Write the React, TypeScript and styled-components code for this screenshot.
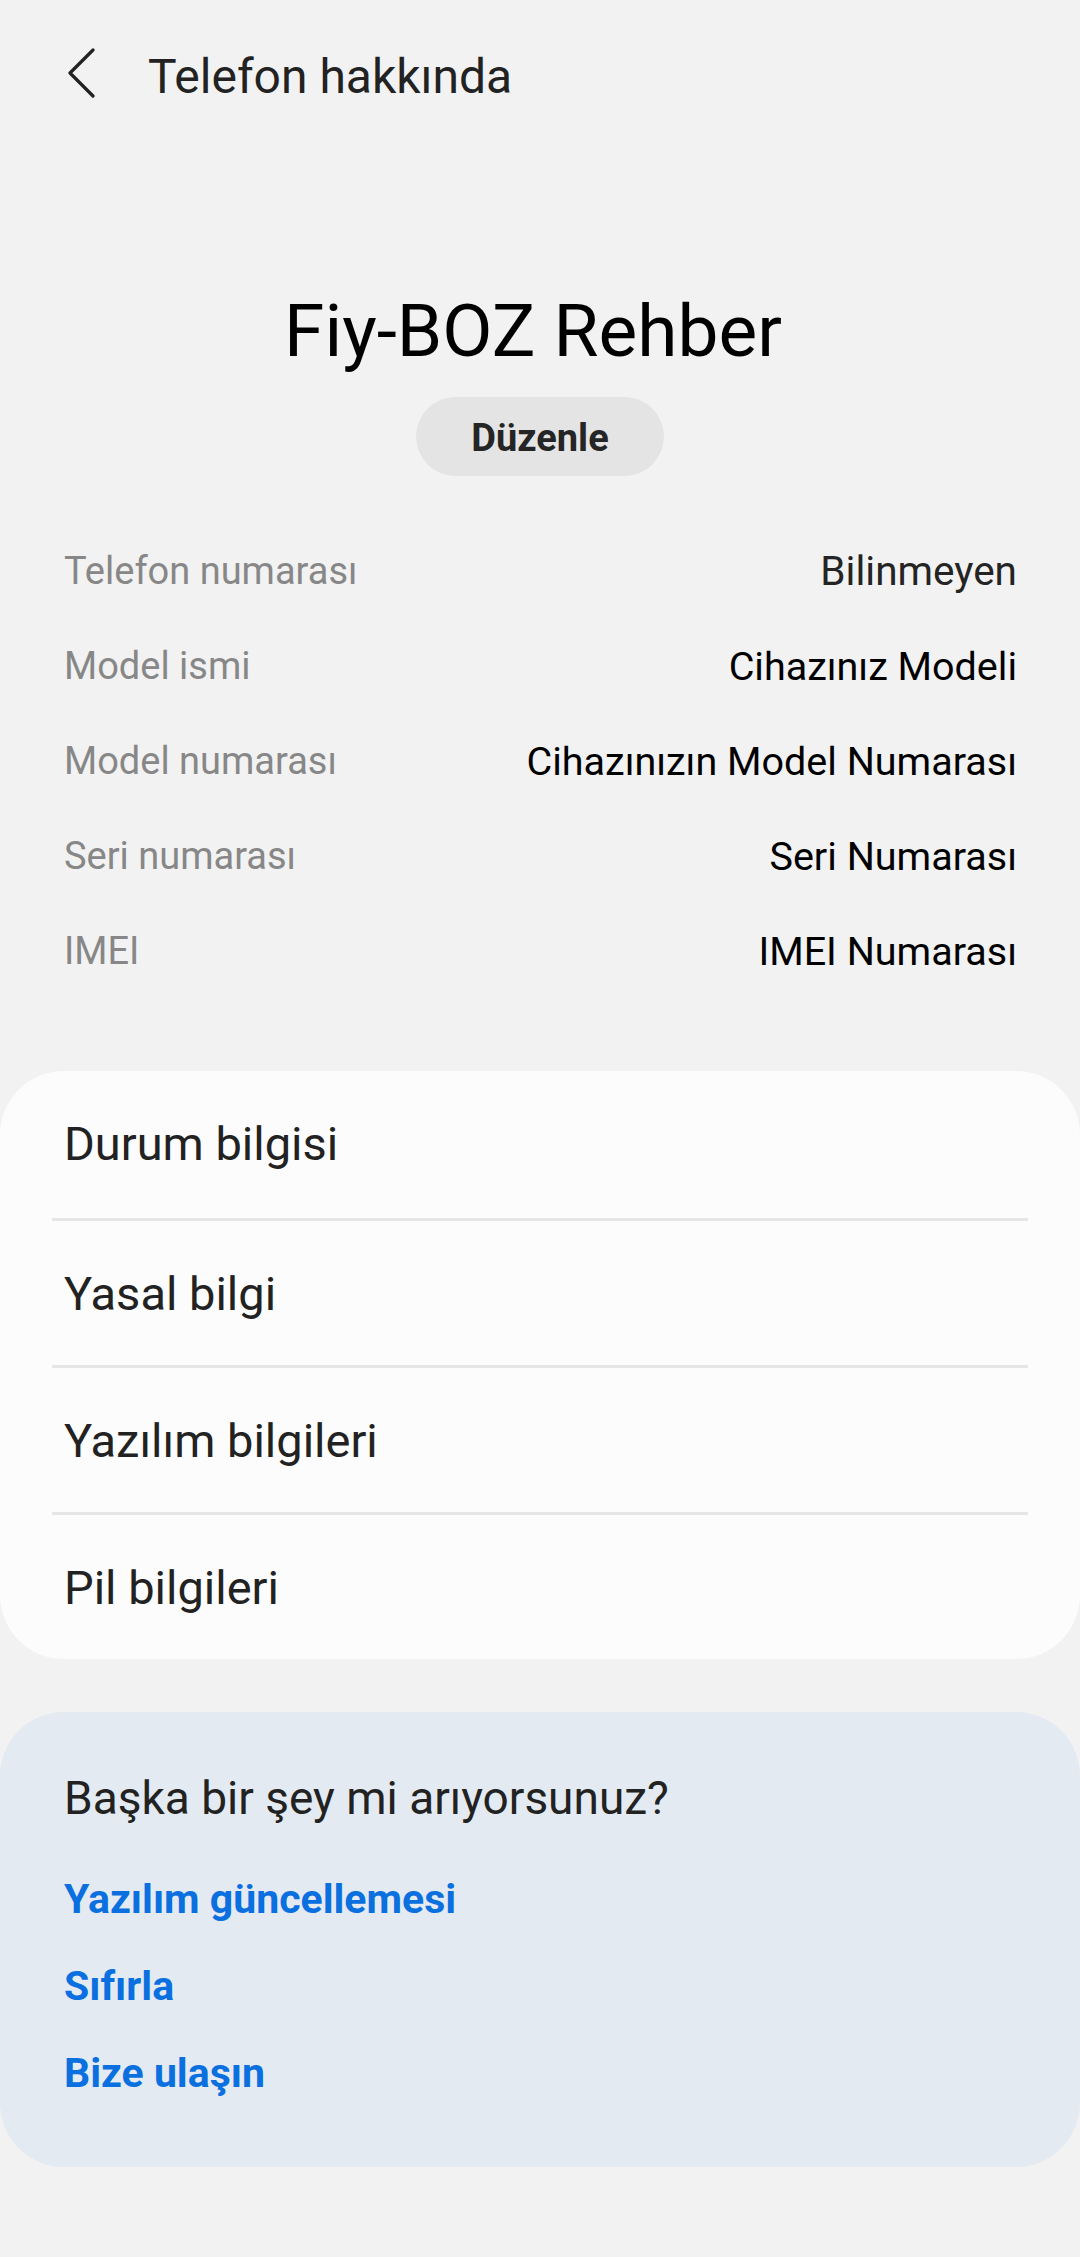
import React from "react";
import styled, { createGlobalStyle } from "styled-components";

const GlobalStyle = createGlobalStyle`
  html, body {
    margin: 0;
    padding: 0;
    background: #f2f2f2;
  }
  body {
    font-family: Roboto, "Noto Sans", sans-serif;
    color: #222;
    -webkit-font-smoothing: antialiased;
  }
  * { box-sizing: border-box; }
`;

const Page = styled.div`
  width: 1080px;
  min-height: 2257px;
  background: #f2f2f2;
  display: flex;
  flex-direction: column;
`;

const Header = styled.header`
  display: flex;
  align-items: flex-start;
  padding: 48px 0 0 66px;
  height: 160px;
`;

const BackButton = styled.button`
  width: 32px;
  height: 50px;
  padding: 0;
  border: none;
  background: transparent;
  display: flex;
  align-items: center;
  justify-content: center;
  cursor: pointer;
`;

const HeaderTitle = styled.h1`
  margin: 5px 0 0 50px;
  font-size: 48px;
  line-height: 48px;
  font-weight: 400;
  color: #222;
`;

const Profile = styled.section`
  display: flex;
  flex-direction: column;
  align-items: center;
  padding-top: 135px;
`;

const DeviceName = styled.h2`
  margin: 0 14px 0 0;
  font-size: 73px;
  line-height: 72px;
  font-weight: 400;
  color: #000;
`;

const EditButton = styled.button`
  margin-top: 30px;
  width: 248px;
  height: 79px;
  padding: 3px 0 0;
  border: none;
  border-radius: 40px;
  background: #e4e4e4;
  font-family: Roboto, sans-serif;
  font-size: 38px;
  font-weight: 700;
  color: #252525;
  cursor: pointer;
`;

const InfoList = styled.dl`
  margin: 48px 0 0;
  padding: 0 63px 0 64px;
`;

const InfoRow = styled.div`
  display: flex;
  justify-content: space-between;
  align-items: center;
  height: 95px;
`;

const InfoLabel = styled.dt`
  font-size: 38px;
  line-height: 95px;
  color: #878787;
`;

const InfoValue = styled.dd<{ $muted?: boolean }>`
  margin: 0;
  font-size: ${(p) => (p.$muted ? "40.5px" : "39.5px")};
  line-height: 95px;
  color: ${(p) => (p.$muted ? "#242424" : "#000")};
`;

const MenuCard = styled.nav`
  margin-top: 72px;
  background: #fcfcfc;
  border-radius: 64px;
  padding: 0 52px;
`;

const MenuItem = styled.div`
  height: 147px;
  padding-left: 12px;
  font-size: 47px;
  line-height: 145px;
  color: #222;
  & + & {
    border-top: 3px solid #e6e6e6;
  }
`;

const SuggestCard = styled.section`
  margin-top: 53px;
  background: #e3eaf1;
  border-radius: 64px;
  padding: 56px 64px 50px;
  display: flex;
  flex-direction: column;
`;

const SuggestTitle = styled.h3`
  margin: 0 0 28px;
  font-size: 46px;
  line-height: 60px;
  font-weight: 400;
  color: #222;
`;

const SuggestLink = styled.a`
  display: block;
  font-size: 41px;
  line-height: 87px;
  font-weight: 700;
  color: #0a6fdf;
  text-decoration: none;
`;

const info: { label: string; value: string; muted?: boolean }[] = [
  { label: "Telefon numarası", value: "Bilinmeyen", muted: true },
  { label: "Model ismi", value: "Cihazınız Modeli" },
  { label: "Model numarası", value: "Cihazınızın Model Numarası" },
  { label: "Seri numarası", value: "Seri Numarası" },
  { label: "IMEI", value: "IMEI Numarası" },
];

const menu = ["Durum bilgisi", "Yasal bilgi", "Yazılım bilgileri", "Pil bilgileri"];
const links = ["Yazılım güncellemesi", "Sıfırla", "Bize ulaşın"];

export default function App() {
  return (
    <Page>
      <GlobalStyle />
      <Header>
        <BackButton aria-label="Geri">
          <svg width="32" height="50" viewBox="0 0 32 50" fill="none">
            <path
              d="M27 2 L4 25 L27 48"
              stroke="#222"
              strokeWidth="3.2"
              strokeLinecap="round"
              strokeLinejoin="round"
            />
          </svg>
        </BackButton>
        <HeaderTitle>Telefon hakkında</HeaderTitle>
      </Header>
      <Profile>
        <DeviceName>Fiy-BOZ Rehber</DeviceName>
        <EditButton>Düzenle</EditButton>
      </Profile>
      <InfoList>
        {info.map((row) => (
          <InfoRow key={row.label}>
            <InfoLabel>{row.label}</InfoLabel>
            <InfoValue $muted={row.muted}>{row.value}</InfoValue>
          </InfoRow>
        ))}
      </InfoList>
      <MenuCard>
        {menu.map((m) => (
          <MenuItem key={m}>{m}</MenuItem>
        ))}
      </MenuCard>
      <SuggestCard>
        <SuggestTitle>Başka bir şey mi arıyorsunuz?</SuggestTitle>
        {links.map((l) => (
          <SuggestLink key={l} href="#">
            {l}
          </SuggestLink>
        ))}
      </SuggestCard>
    </Page>
  );
}
